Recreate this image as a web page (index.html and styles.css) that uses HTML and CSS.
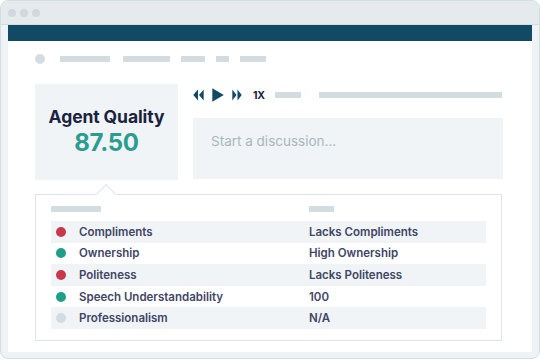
FILE: index.html
```html
<!DOCTYPE html>
<html>
<head>
<meta charset="utf-8">
<link rel="stylesheet" href="styles.css">
</head>
<body>
<div class="frame">
  <div class="titlebar">
    <span class="tdot"></span><span class="tdot"></span><span class="tdot"></span>
  </div>
  <div class="body">
    <div class="app">
      <div class="navbar"></div>
      <div class="content">
        <div class="nav">
          <span class="nav-circle"></span>
          <span class="bar w50"></span>
          <span class="bar w47"></span>
          <span class="bar w24"></span>
          <span class="bar w13"></span>
          <span class="bar w26"></span>
        </div>
        <div class="main">
          <div class="card">
            <div class="card-title">Agent Quality</div>
            <div class="card-score">87.50</div>
          </div>
          <div class="right">
            <div class="controls">
              <svg class="ic-rew" width="11" height="12" viewBox="0 0 11 12"><polygon points="5,0.5 5,11.5 0.3,6" fill="#124a66"/><polygon points="10.7,0.5 10.7,11.5 6,6" fill="#124a66"/></svg>
              <svg class="ic-play" width="12" height="14" viewBox="0 0 12 14"><polygon points="0.3,0.3 11.8,7 0.3,13.7" fill="#124a66"/></svg>
              <svg class="ic-fwd" width="10" height="12" viewBox="0 0 10 12"><polygon points="0.3,0.5 0.3,11.5 4.5,6" fill="#124a66"/><polygon points="5.5,0.5 5.5,11.5 9.7,6" fill="#124a66"/></svg>
              <span class="speed">1X</span>
              <span class="cbar short"></span>
              <span class="cbar long"></span>
            </div>
            <div class="discuss">Start a discussion...</div>
          </div>
        </div>
        <div class="panel">
          <span class="caret"></span>
          <div class="phead">
            <span class="hbar a"></span>
            <span class="hbar b"></span>
          </div>
          <div class="row shade"><span class="dot red"></span><span class="lbl">Compliments</span><span class="val">Lacks Compliments</span></div>
          <div class="row"><span class="dot teal"></span><span class="lbl">Ownership</span><span class="val">High Ownership</span></div>
          <div class="row shade"><span class="dot red"></span><span class="lbl">Politeness</span><span class="val">Lacks Politeness</span></div>
          <div class="row"><span class="dot teal"></span><span class="lbl">Speech Understandability</span><span class="val">100</span></div>
          <div class="row shade"><span class="dot grey"></span><span class="lbl">Professionalism</span><span class="val">N/A</span></div>
        </div>
      </div>
    </div>
  </div>
</div>
</body>
</html>
```

FILE: styles.css
```css
* { box-sizing: border-box; }
html, body { margin: 0; padding: 0; background: #ffffff; }
body { font-family: Inter, "Noto Sans", sans-serif; }

.frame {
  width: 540px;
  height: 359px;
  border: 1px solid #d4dde2;
  border-radius: 8px;
  background: #eef3f5;
  overflow: hidden;
  display: flex;
  flex-direction: column;
}
.titlebar {
  height: 24px;
  flex: none;
  background: #e5eaec;
  border-bottom: 1px solid #d4dde2;
  display: flex;
  align-items: center;
  gap: 4px;
  padding-left: 7px;
}
.tdot { width: 8px; height: 8px; border-radius: 50%; background: #d0d9df; }
.body {
  flex: 1;
  padding: 0 7px 6px 7px;
  display: flex;
}
.app { flex: 1; background: #fff; display: flex; flex-direction: column; }
.navbar { height: 16px; background: #124a66; flex: none; }
.content { padding: 13px 0 0 27px; }

.nav { display: flex; align-items: center; height: 10px; }
.nav-circle { width: 10px; height: 10px; border-radius: 50%; background: #d3dce1; margin-right: 15px; }
.bar { height: 6px; background: #d3dce1; margin-right: 11px; }
.w50 { width: 50px; margin-right: 13px; }
.w47 { width: 47px; }
.w24 { width: 24px; }
.w13 { width: 13px; }
.w26 { width: 26px; }

.main { display: flex; margin-top: 20px; gap: 15px; }
.card {
  width: 143px;
  height: 96px;
  background: #f0f4f6;
  display: flex;
  flex-direction: column;
  align-items: center;
  padding-top: 23px;
}
.card-title { font-size: 17.5px; font-weight: 700; color: #1b2240; line-height: 20px; letter-spacing: -0.1px; }
.card-score { font-size: 24px; font-weight: 700; color: #2a9d8f; line-height: 28px; margin-top: 2px; letter-spacing: -0.3px; }

.right { width: 310px; }
.controls { display: flex; align-items: center; height: 22px; margin-top: 0; }
.ic-rew { margin-left: 0; }
.ic-play { margin-left: 8px; }
.ic-fwd { margin-left: 8px; }
.speed { font-size: 10.5px; font-weight: 700; color: #1b2240; margin-left: 11px; letter-spacing: -0.4px; }
.cbar { height: 6px; background: #d3dce1; }
.short { width: 26px; margin-left: 11px; }
.long { width: 183px; margin-left: 18px; }
.discuss {
  margin-top: 12px;
  height: 61px;
  background: #f0f4f6;
  padding: 14px 0 0 18px;
  font-size: 13.5px;
  color: #a9b7bf;
  line-height: 18px;
}

.panel {
  position: relative;
  margin-top: 14px;
  width: 467px;
  height: 147px;
  border: 1.5px solid #dde5ea;
  padding: 11px 15px 0 15px;
}
.caret {
  position: absolute;
  left: 63px;
  top: -8px;
  width: 14px;
  height: 14px;
  background: #fff;
  border-top: 1.5px solid #dde5ea;
  border-left: 1.5px solid #dde5ea;
  transform: rotate(45deg);
}
.phead { position: relative; display: flex; height: 6px; margin-bottom: 9px; }
.hbar { height: 6px; background: #d3dce1; }
.hbar.a { width: 50px; }
.hbar.b { width: 25px; margin-left: 208px; }
.row {
  display: flex;
  align-items: center;
  height: 21.6px;
  font-size: 11.5px;
  font-weight: 600;
  color: #3f4566;
}
.row.shade { background: #f0f4f6; }
.dot { width: 10px; height: 10px; border-radius: 50%; margin-left: 5px; margin-right: 13px; flex: none; }
.dot.red { background: #c8374a; }
.dot.teal { background: #1f9e8a; }
.dot.grey { background: #d3dce1; }
.lbl { width: 230px; }
```
